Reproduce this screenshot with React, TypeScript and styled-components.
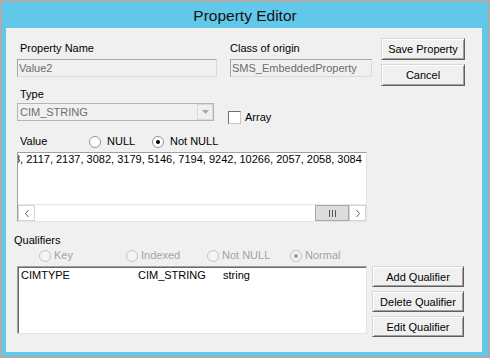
import { createGlobalStyle, styled } from "styled-components";

const GlobalStyle = createGlobalStyle`
  html, body {
    margin: 0;
    padding: 0;
  }
  body {
    background: #ababab;
    font-family: "Liberation Sans", Arial, sans-serif;
    font-size: 11px;
    color: #000;
  }
`;

const Window = styled.div`
  margin: 2px;
  width: 486px;
  height: 354px;
  box-sizing: border-box;
  background: #62c8ea;
  padding: 0 6px 4px 4px;
  display: flex;
  flex-direction: column;
`;

const TitleBar = styled.div`
  height: 26px;
  display: flex;
  align-items: center;
  justify-content: center;
  font-size: 15.5px;
  color: #141414;
  padding-left: 2px;
  padding-top: 1px;
  box-sizing: border-box;
`;

const Body = styled.div`
  flex: 1;
  background: #f0f0f0;
  padding: 10px 0 0 11px;
  display: flex;
  flex-direction: column;
`;

const TopRow = styled.div`
  display: flex;
  gap: 9px;
`;

const LeftCol = styled.div`
  width: 355px;
  padding-top: 4px;
  display: flex;
  flex-direction: column;
`;

const FieldsRow = styled.div`
  display: flex;
  gap: 13px;
`;

const Field = styled.div`
  display: flex;
  flex-direction: column;
  gap: 4px;
`;

const Label = styled.span<{ $indent?: number; $top?: number }>`
  display: block;
  line-height: 13px;
  height: 13px;
  padding-left: ${(p) => p.$indent ?? 0}px;
  margin-top: ${(p) => p.$top ?? 0}px;
  white-space: nowrap;
`;

const TextBox = styled.input<{ $w: number }>`
  width: ${(p) => p.$w}px;
  height: 18px;
  box-sizing: border-box;
  margin: 0;
  border: 1px solid;
  border-color: #a6a6a6 #dadada #dadada #a6a6a6;
  background: #f0f0f0;
  color: #6d6d6d;
  padding: 0 1px;
  font: 11px "Liberation Sans", Arial, sans-serif;
  outline: none;
`;

const TypeRow = styled.div`
  display: flex;
  align-items: flex-start;
  margin-top: 2px;
`;

const Select = styled.div`
  width: 197px;
  height: 18px;
  box-sizing: border-box;
  border: 1px solid #b4b4b4;
  background: #f0f0f0;
  color: #6d6d6d;
  display: flex;
  align-items: center;
  justify-content: space-between;
  padding-left: 2px;
`;

const SelectArrow = styled.span`
  width: 16px;
  height: 16px;
  box-sizing: border-box;
  border: 1px solid #d9d9d9;
  display: flex;
  align-items: center;
  justify-content: center;
`;

const CheckLabel = styled.label`
  display: flex;
  align-items: center;
  gap: 4px;
  margin: 8px 0 0 14px;
  line-height: 13px;
`;

const CheckBox = styled.span`
  width: 13px;
  height: 13px;
  box-sizing: border-box;
  border: 1px solid;
  border-color: #6f6f6f #c8c8c8 #c8c8c8 #6f6f6f;
  background: #fff;
`;

const ButtonCol = styled.div<{ $gap: number }>`
  display: flex;
  flex-direction: column;
  gap: ${(p) => p.$gap}px;
`;

const Button = styled.button<{ $w: number; $h: number }>`
  width: ${(p) => p.$w}px;
  height: ${(p) => p.$h}px;
  margin: 0;
  padding: 0;
  box-sizing: border-box;
  background: #f0f0f0;
  border: 1px solid;
  border-color: #d8d8d8 #5f5f5f #5f5f5f #d8d8d8;
  box-shadow: inset 1px 1px #ffffff, inset -1px -1px #a0a0a0;
  font: 11px "Liberation Sans", Arial, sans-serif;
  color: #000;
`;

const ValueHeader = styled.div`
  display: flex;
  align-items: center;
  height: 13px;
  margin-top: 11px;
`;

const ValueLabel = styled.span`
  width: 69px;
  padding-left: 3px;
  line-height: 13px;
`;

const RadioOption = styled.label<{ $w?: number; $gap: number; $disabled?: boolean }>`
  display: flex;
  align-items: center;
  gap: ${(p) => p.$gap}px;
  width: ${(p) => (p.$w ? `${p.$w}px` : "auto")};
  color: ${(p) => (p.$disabled ? "#a3a3a3" : "#000")};
  line-height: 13px;
  white-space: nowrap;
`;

const RadioDot = styled.span<{ $checked?: boolean; $disabled?: boolean }>`
  width: 12px;
  height: 12px;
  box-sizing: border-box;
  border-radius: 50%;
  border: 1px solid ${(p) => (p.$disabled ? "#c4c4c4" : "#949494")};
  background: ${(p) => (p.$disabled ? "#f4f4f4" : "#fff")};
  display: flex;
  align-items: center;
  justify-content: center;
  &::after {
    content: "";
    width: 4px;
    height: 4px;
    border-radius: 50%;
    background: ${(p) => (p.$disabled ? "#a0a0a0" : "#000")};
    display: ${(p) => (p.$checked ? "block" : "none")};
  }
`;

const TextArea = styled.div`
  margin-top: 4px;
  width: 350px;
  height: 70px;
  box-sizing: border-box;
  border: 1px solid;
  border-color: #a0a0a0 #e3e3e3 #e3e3e3 #a0a0a0;
  background: #fff;
  display: flex;
  flex-direction: column;
  justify-content: space-between;
  overflow: hidden;
`;

const AreaText = styled.div`
  white-space: nowrap;
  line-height: 12px;
  margin-left: -4px;
  padding-top: 0;
`;

const ScrollBar = styled.div`
  height: 17px;
  display: flex;
  border-top: 1px solid #e6e6e6;
  box-sizing: border-box;
`;

const ScrollArrow = styled.span`
  width: 17px;
  box-sizing: border-box;
  border: 1px solid #d4d4d4;
  display: flex;
  align-items: center;
  justify-content: center;
  background: #fff;
`;

const ScrollTrack = styled.span`
  flex: 1;
  display: flex;
  justify-content: flex-end;
  background: #fff;
`;

const ScrollThumb = styled.span`
  width: 34px;
  box-sizing: border-box;
  border: 1px solid #a8a8a8;
  background: #dcdcdc;
  display: flex;
  align-items: center;
  justify-content: center;
`;

const QualLabel = styled.span`
  margin: 12px 0 0 -3px;
  line-height: 13px;
`;

const QualRadios = styled.div`
  display: flex;
  margin-top: 2px;
  padding-left: 22px;
  height: 13px;
  align-items: center;
`;

const QualRow = styled.div`
  display: flex;
  gap: 5px;
  margin-top: 4px;
  align-items: flex-start;
`;

const ListBox = styled.div`
  width: 350px;
  height: 68px;
  box-sizing: border-box;
  border: 1px solid;
  border-color: #a0a0a0 #e3e3e3 #e3e3e3 #a0a0a0;
  box-shadow: inset 1px 1px #696969;
  background: #fff;
  padding: 2px 0 0 3px;
`;

const ListRow = styled.div`
  display: grid;
  grid-template-columns: 117px 85px 1fr;
  line-height: 12px;
`;

function Chevron({ dir }: { dir: "left" | "right" }) {
  return (
    <svg width="6" height="9" viewBox="0 0 6 9">
      <path
        d={dir === "left" ? "M4.5 1 L1.5 4.5 L4.5 8" : "M1.5 1 L4.5 4.5 L1.5 8"}
        fill="none"
        stroke="#606060"
        strokeWidth="1"
      />
    </svg>
  );
}

const numbers =
  "8, 2117, 2137, 3082, 3179, 5146, 7194, 9242, 10266, 2057, 2058, 3084";

export default function App() {
  return (
    <>
      <GlobalStyle />
      <Window>
        <TitleBar>Property Editor</TitleBar>
        <Body>
          <TopRow>
            <LeftCol>
              <FieldsRow>
                <Field>
                  <Label $indent={3}>Property Name</Label>
                  <TextBox $w={200} value="Value2" readOnly />
                </Field>
                <Field>
                  <Label>Class of origin</Label>
                  <TextBox $w={142} value="SMS_EmbeddedProperty" readOnly />
                </Field>
              </FieldsRow>
              <Label $indent={3} $top={11}>
                Type
              </Label>
              <TypeRow>
                <Select>
                  <span>CIM_STRING</span>
                  <SelectArrow>
                    <svg width="7" height="4" viewBox="0 0 7 4">
                      <path d="M0 0 H7 L3.5 4 Z" fill="#a8a8a8" />
                    </svg>
                  </SelectArrow>
                </Select>
                <CheckLabel>
                  <CheckBox />
                  Array
                </CheckLabel>
              </TypeRow>
            </LeftCol>
            <ButtonCol $gap={4}>
              <Button $w={84} $h={22}>Save Property</Button>
              <Button $w={84} $h={22}>Cancel</Button>
            </ButtonCol>
          </TopRow>

          <ValueHeader>
            <ValueLabel>Value</ValueLabel>
            <RadioOption $w={63} $gap={6}>
              <RadioDot />
              NULL
            </RadioOption>
            <RadioOption $gap={6}>
              <RadioDot $checked />
              Not NULL
            </RadioOption>
          </ValueHeader>
          <TextArea>
            <AreaText>{numbers}</AreaText>
            <ScrollBar>
              <ScrollArrow>
                <Chevron dir="left" />
              </ScrollArrow>
              <ScrollTrack>
                <ScrollThumb>
                  <svg width="7" height="7" viewBox="0 0 7 7">
                    <path d="M0.5 0 V7 M3.5 0 V7 M6.5 0 V7" stroke="#555" strokeWidth="1" />
                  </svg>
                </ScrollThumb>
              </ScrollTrack>
              <ScrollArrow>
                <Chevron dir="right" />
              </ScrollArrow>
            </ScrollBar>
          </TextArea>

          <QualLabel>Qualifiers</QualLabel>
          <QualRadios>
            <RadioOption $w={87} $gap={3} $disabled>
              <RadioDot $disabled />
              Key
            </RadioOption>
            <RadioOption $w={81} $gap={3} $disabled>
              <RadioDot $disabled />
              Indexed
            </RadioOption>
            <RadioOption $w={83} $gap={3} $disabled>
              <RadioDot $disabled />
              Not NULL
            </RadioOption>
            <RadioOption $gap={3} $disabled>
              <RadioDot $disabled $checked />
              Normal
            </RadioOption>
          </QualRadios>
          <QualRow>
            <ListBox>
              <ListRow>
                <span>CIMTYPE</span>
                <span>CIM_STRING</span>
                <span>string</span>
              </ListRow>
            </ListBox>
            <ButtonCol $gap={4}>
              <Button $w={92} $h={21}>Add Qualifier</Button>
              <Button $w={92} $h={21}>Delete Qualifier</Button>
              <Button $w={92} $h={21}>Edit Qualifier</Button>
            </ButtonCol>
          </QualRow>
        </Body>
      </Window>
    </>
  );
}
